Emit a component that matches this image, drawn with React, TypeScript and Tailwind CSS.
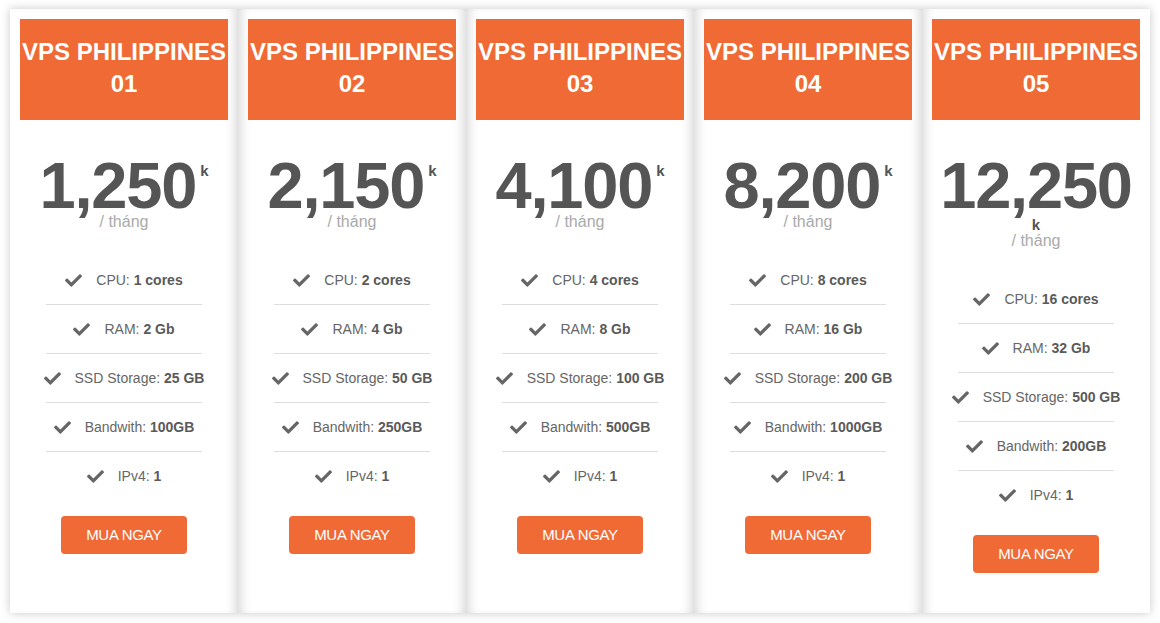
import { FaCheck } from 'react-icons/fa';

type Plan = {
    id: string;
    price: string;
    cpu: string;
    ram: string;
    ssd: string;
    bw: string;
    ipv4: string;
};

const plans: Plan[] = [
    { id: '01', price: '1,250', cpu: '1 cores', ram: '2 Gb', ssd: '25 GB', bw: '100GB', ipv4: '1' },
    { id: '02', price: '2,150', cpu: '2 cores', ram: '4 Gb', ssd: '50 GB', bw: '250GB', ipv4: '1' },
    { id: '03', price: '4,100', cpu: '4 cores', ram: '8 Gb', ssd: '100 GB', bw: '500GB', ipv4: '1' },
    { id: '04', price: '8,200', cpu: '8 cores', ram: '16 Gb', ssd: '200 GB', bw: '1000GB', ipv4: '1' },
    { id: '05', price: '12,250', cpu: '16 cores', ram: '32 Gb', ssd: '500 GB', bw: '200GB', ipv4: '1' },
];

const edgeShadow = [
    'shadow-[inset_-10px_0_12px_-8px_rgba(0,0,0,0.18)]',
    'shadow-[inset_10px_0_12px_-8px_rgba(0,0,0,0.18),inset_-10px_0_12px_-8px_rgba(0,0,0,0.18)]',
    'shadow-[inset_10px_0_12px_-8px_rgba(0,0,0,0.18)]',
];

function Feature({ label, value }: { label: string; value: string }) {
    return (
        <li className="flex items-center justify-center gap-[14px] h-[49px] border-b border-[#dddddd] last:border-b-0 text-[14px] text-[#666666]">
            <FaCheck className="shrink-0 w-[17px] h-[17px] text-[#666666]" />
            <span className="shrink-0 whitespace-nowrap">
                {label}: <b className="font-bold text-[#5a5a5a]">{value}</b>
            </span>
        </li>
    );
}

function PlanCard({ plan, index }: { plan: Plan; index: number }) {
    const long = plan.price.length > 5;
    const shadow =
        index === 0 ? edgeShadow[0] : index === plans.length - 1 ? edgeShadow[2] : edgeShadow[1];

    return (
        <div className={`flex flex-col items-center w-[228px] h-full bg-white p-[10px] ${shadow}`}>
            <div className="w-full bg-[#f06a35] pt-[17px] pb-[20px] text-center text-white font-bold text-[24px] leading-[32px]">
                <div className="whitespace-nowrap">VPS PHILIPPINES</div>
                <div>{plan.id}</div>
            </div>

            <div className="mt-[40px] text-center text-[#555555] font-bold">
                <div className="text-[65px] leading-[52px] tracking-[-1.2px] whitespace-nowrap">
                    {plan.price}
                    {!long && (
                        <span className="relative -top-[32px] ml-[4px] text-[15px] leading-none tracking-normal">
                            k
                        </span>
                    )}
                </div>
                {long && <div className="mt-[5px] text-[15px] leading-[15px]">k</div>}
            </div>
            <div className={`text-[16px] leading-[20px] text-[#aaaaaa] ${long ? '-mt-[1px]' : ''}`}>
                / tháng
            </div>

            <ul className="mt-[24px] w-[156px]">
                <Feature label="CPU" value={plan.cpu} />
                <Feature label="RAM" value={plan.ram} />
                <Feature label="SSD Storage" value={plan.ssd} />
                <Feature label="Bandwith" value={plan.bw} />
                <Feature label="IPv4" value={plan.ipv4} />
            </ul>

            <button className="mt-[15px] w-[126px] h-[38px] rounded-[4px] bg-[#f06a35] text-white text-[15px] tracking-[-0.3px]">
                MUA NGAY
            </button>
        </div>
    );
}

export default function App() {
    return (
        <div
            className="w-[1160px] h-[623px] bg-white pt-[9px] pl-[10px]"
            style={{ fontFamily: '"Liberation Sans", Arial, sans-serif' }}
        >
            <div className="flex w-[1140px] h-[604px] bg-white shadow-[0_0_9px_rgba(0,0,0,0.22)]">
                {plans.map((p, i) => (
                    <PlanCard key={p.id} plan={p} index={i} />
                ))}
            </div>
        </div>
    );
}
